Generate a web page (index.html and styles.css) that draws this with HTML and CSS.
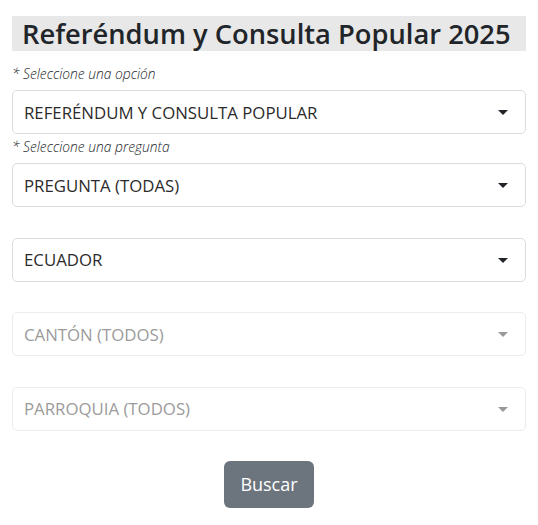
FILE: index.html
```html
<!DOCTYPE html>
<html lang="es">
<head>
    <meta charset="UTF-8">
    <meta name="viewport" content="width=device-width, initial-scale=1.0">
    <title>Referéndum y Consulta Popular 2025</title>
    <link rel="stylesheet" href="styles.css">
</head>
<body>
    <div class="container">
        <h1 class="title">Referéndum y Consulta Popular 2025</h1>
        <form id="form">
            <div class="field first">
                <label for="opcion">* Seleccione una opción</label>
                <div class="select-wrap">
                    <select id="opcion">
                        <option>REFERÉNDUM Y CONSULTA POPULAR</option>
                    </select>
                    <svg class="caret" width="10" height="5" viewBox="0 0 10 5"><path d="M0 0h10L5 5z"/></svg>
                </div>
            </div>
            <div class="field">
                <label for="pregunta">* Seleccione una pregunta</label>
                <div class="select-wrap">
                    <select id="pregunta">
                        <option>PREGUNTA (TODAS)</option>
                    </select>
                    <svg class="caret" width="10" height="5" viewBox="0 0 10 5"><path d="M0 0h10L5 5z"/></svg>
                </div>
            </div>
            <div class="field">
                <label class="blank" for="provincia">&nbsp;</label>
                <div class="select-wrap">
                    <select id="provincia">
                        <option>ECUADOR</option>
                    </select>
                    <svg class="caret" width="10" height="5" viewBox="0 0 10 5"><path d="M0 0h10L5 5z"/></svg>
                </div>
            </div>
            <div class="field">
                <label class="blank" for="canton">&nbsp;</label>
                <div class="select-wrap disabled">
                    <select id="canton" disabled>
                        <option>CANTÓN (TODOS)</option>
                    </select>
                    <svg class="caret" width="10" height="5" viewBox="0 0 10 5"><path d="M0 0h10L5 5z"/></svg>
                </div>
            </div>
            <div class="field">
                <label class="blank" for="parroquia">&nbsp;</label>
                <div class="select-wrap disabled">
                    <select id="parroquia" disabled>
                        <option>PARROQUIA (TODOS)</option>
                    </select>
                    <svg class="caret" width="10" height="5" viewBox="0 0 10 5"><path d="M0 0h10L5 5z"/></svg>
                </div>
            </div>
            <div class="actions">
                <button type="submit">Buscar</button>
            </div>
        </form>
    </div>
</body>
</html>
```

FILE: styles.css
```css
body {
    margin: 0;
    background-color: #fff;
    font-family: "Open Sans", "Noto Sans", sans-serif;
    color: #212529;
}

.container {
    padding: 16px 12px 0 12px;
}

.title {
    margin: 0;
    padding: 0 8px 0 10px;
    height: 35px;
    line-height: 36px;
    background-color: #e8e8e8;
    font-size: 27.3px;
    font-weight: 600;
    color: #212529;
    white-space: nowrap;
}

.field label {
    display: block;
    height: 20px;
    line-height: 20px;
    padding-top: 3px;
    margin-bottom: 6px;
    font-size: 13.8px;
    font-style: italic;
    font-weight: 300;
    color: #212529;
}

.field label.blank {
    height: 21.5px;
    padding-top: 0;
    margin-bottom: 9px;
}

.field.first label {
    padding-top: 13px;
    margin-bottom: 6px;
}

.select-wrap {
    position: relative;
}

.select-wrap select {
    display: block;
    width: 100%;
    height: 44px;
    padding: 0 40px 0 11px;
    border: 1px solid #dcdcdc;
    border-radius: 5px;
    background-color: #fff;
    font-family: inherit;
    font-size: 16.8px;
    font-weight: 400;
    color: #2b2b2b;
    appearance: none;
    -webkit-appearance: none;
    box-sizing: border-box;
}

.select-wrap .caret {
    position: absolute;
    right: 18px;
    top: 20px;
    fill: #212529;
}

.select-wrap.disabled select {
    border-color: #ececec;
    color: #9b9b9b;
    opacity: 1;
}

.select-wrap.disabled .caret {
    fill: #999;
}

.actions {
    display: flex;
    justify-content: center;
    padding-top: 30px;
}

.actions button {
    width: 90px;
    height: 47px;
    padding: 0;
    background-color: #6c757d;
    color: #fff;
    border: none;
    border-radius: 6px;
    font-family: inherit;
    font-size: 18px;
    cursor: pointer;
}
```
